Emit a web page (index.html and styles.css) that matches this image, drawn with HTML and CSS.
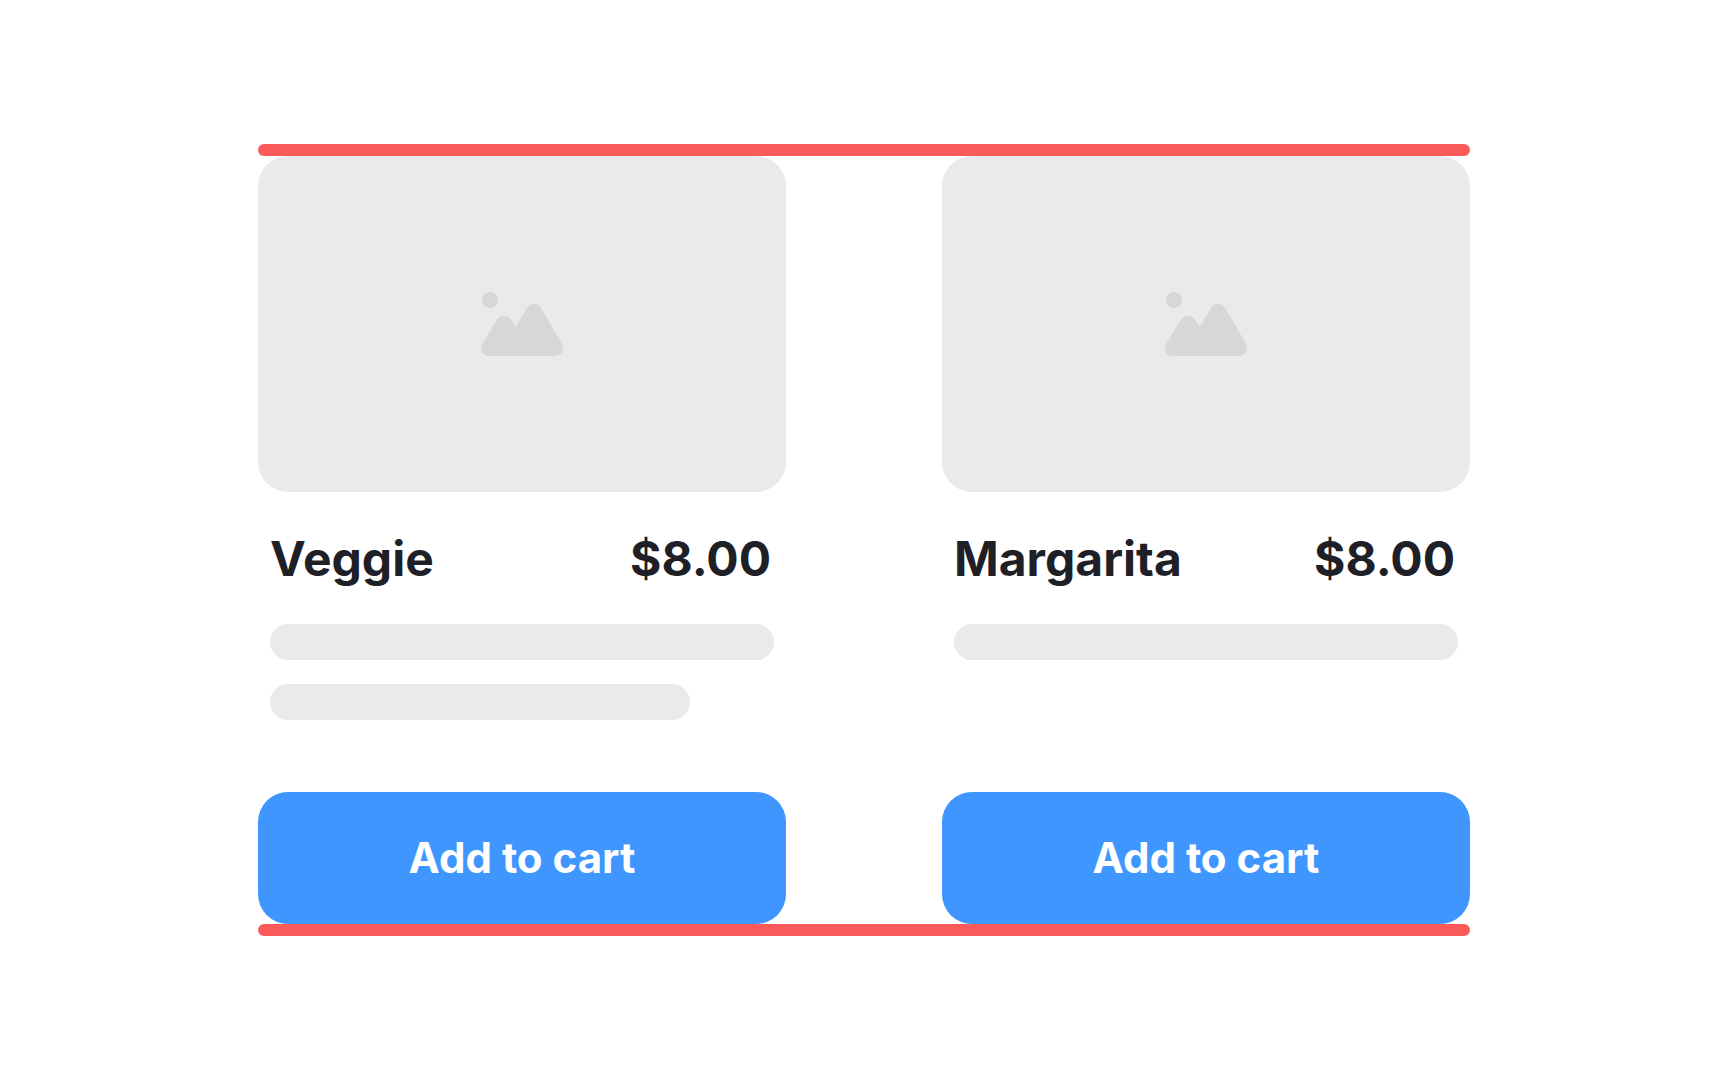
FILE: index.html
```html
<!DOCTYPE html>
<html lang="en">
<head>
  <meta charset="UTF-8">
  <meta name="viewport" content="width=device-width, initial-scale=1.0">
  <title>Pizza menu</title>
  <link rel="stylesheet" href="styles.css">
</head>
<body>
  <main class="menu">
    <div class="line"></div>

    <div class="cards">
      <article class="card">
        <div class="card-image">
          <svg class="image-icon" viewBox="63 66 246 192" aria-hidden="true">
            <circle cx="90" cy="90" r="24" />
            <path d="M87 258 C68 258 57 238 67 221 L110 150 C120 133 144 133 154 150 L167 171 L200 115 C210 97 234 97 244 115 L305 220 C315 238 304 258 285 258 Z" />
          </svg>
        </div>
        <div class="card-info">
          <div class="card-header">
            <h2>Veggie</h2>
            <span class="price">$8.00</span>
          </div>
          <div class="description">
            <div class="text-line"></div>
            <div class="text-line short"></div>
          </div>
        </div>
        <button type="button">Add to cart</button>
      </article>

      <article class="card">
        <div class="card-image">
          <svg class="image-icon" viewBox="63 66 246 192" aria-hidden="true">
            <circle cx="90" cy="90" r="24" />
            <path d="M87 258 C68 258 57 238 67 221 L110 150 C120 133 144 133 154 150 L167 171 L200 115 C210 97 234 97 244 115 L305 220 C315 238 304 258 285 258 Z" />
          </svg>
        </div>
        <div class="card-info">
          <div class="card-header">
            <h2>Margarita</h2>
            <span class="price">$8.00</span>
          </div>
          <div class="description">
            <div class="text-line"></div>
          </div>
        </div>
        <button type="button">Add to cart</button>
      </article>
    </div>

    <div class="line"></div>
  </main>
</body>
</html>
```

FILE: styles.css
```css
* {
  box-sizing: border-box;
}

body {
  margin: 0;
  min-height: 100vh;
  display: flex;
  align-items: center;
  justify-content: center;
  background: #fff;
  color: #1f1f27;
  font-family: Inter, "Liberation Sans", sans-serif;
}

.menu {
  width: 100%;
  max-width: 1212px;
}

.line {
  height: 12px;
  border-radius: 6px;
  background: #fa5a5a;
}

.cards {
  display: grid;
  grid-template-columns: 1fr 1fr;
  gap: 156px;
}

.card {
  display: flex;
  flex-direction: column;
}

.card-image {
  display: flex;
  align-items: center;
  justify-content: center;
  aspect-ratio: 11 / 7;
  border-radius: 30px;
  background: #eaeaec;
}

.image-icon {
  width: 82px;
  height: 64px;
  fill: #d7d7d9;
}

.card-info {
  flex: 1;
  padding: 36px 12px 72px;
}

.card-header {
  display: flex;
  justify-content: space-between;
  padding-right: 3px;
  margin-bottom: 34px;
  font-size: 48px;
  line-height: 62px;
  font-weight: 700;
}

h2 {
  margin: 0;
  font-size: inherit;
  font-weight: inherit;
}

.description {
  display: flex;
  flex-direction: column;
  gap: 24px;
}

.text-line {
  height: 36px;
  border-radius: 18px;
  background: #eaeaec;
}

.text-line.short {
  width: calc(100% * 5 / 6);
}

button {
  height: 132px;
  padding: 0 0 2px;
  border: none;
  border-radius: 30px;
  background: #4096ff;
  color: #fff;
  font-family: inherit;
  font-size: 42px;
  font-weight: 700;
  cursor: pointer;
}
```
